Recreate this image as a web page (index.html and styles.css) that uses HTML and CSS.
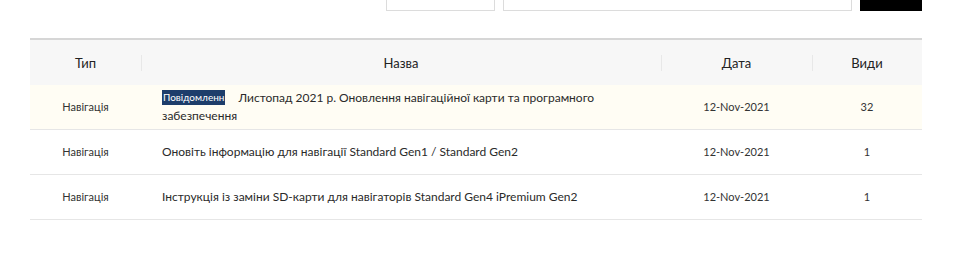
FILE: index.html
```html
<!DOCTYPE html>
<html lang="uk">
<head>
<meta charset="utf-8">
<link rel="stylesheet" href="styles.css">
</head>
<body>
<div class="page">
  <div class="toolbar">
    <div class="select"></div>
    <div class="search"></div>
    <div class="btn"></div>
  </div>
  <table class="list">
    <thead>
      <tr>
        <th class="c-type">Тип</th>
        <th class="c-title sep">Назва</th>
        <th class="c-date sep">Дата</th>
        <th class="c-views sep">Види</th>
      </tr>
    </thead>
    <tbody>
      <tr class="notice">
        <td class="c-type small">Навігація</td>
        <td class="c-title"><span class="tag">Повідомленн</span><span class="gap"></span>Листопад 2021 р. Оновлення навігаційної карти та програмного забезпечення</td>
        <td class="c-date small">12-Nov-2021</td>
        <td class="c-views small">32</td>
      </tr>
      <tr>
        <td class="c-type small">Навігація</td>
        <td class="c-title">Оновіть інформацію для навігації Standard Gen1 / Standard Gen2</td>
        <td class="c-date small">12-Nov-2021</td>
        <td class="c-views small">1</td>
      </tr>
      <tr>
        <td class="c-type small">Навігація</td>
        <td class="c-title">Інструкція із заміни SD-карти для навігаторів Standard Gen4 iPremium Gen2</td>
        <td class="c-date small">12-Nov-2021</td>
        <td class="c-views small">1</td>
      </tr>
    </tbody>
  </table>
</div>
</body>
</html>
```
FILE: styles.css
```css
html, body {
  margin: 0;
  padding: 0;
  background: #fff;
}
body {
  font-family: Lato, "Noto Sans", sans-serif;
  color: #222;
}
.page {
  padding: 0 38px 0 30px;
}
.toolbar {
  display: flex;
  justify-content: flex-end;
  gap: 8px;
  height: 34px;
  margin-top: -23px;
}
.select {
  width: 109px;
  border: 1px solid #dcdcdc;
  box-sizing: border-box;
}
.search {
  width: 349px;
  border: 1px solid #dcdcdc;
  box-sizing: border-box;
}
.btn {
  width: 62px;
  background: #000;
}
.list {
  margin-top: 27px;
  width: 100%;
  table-layout: fixed;
  border-collapse: collapse;
  border-top: 2px solid #d6d6d6;
}
.list th {
  height: 45px;
  background: #f7f7f7;
  font-weight: 400;
  font-size: 13px;
  color: #222;
  text-align: center;
  padding: 0;
  position: relative;
}
.list th.sep::before {
  content: "";
  position: absolute;
  left: 0;
  top: 15px;
  height: 16px;
  width: 1px;
  background: #e8e8e8;
}
.list td {
  border-bottom: 1px solid #e6e6e6;
  height: 44px;
  padding: 0;
  font-size: 12px;
  color: #2a2a2a;
  line-height: 18px;
}
.list tr.notice td {
  background: #fffdf4;
}
.c-type { width: 111px; text-align: center; }
.c-date { width: 151px; text-align: center; }
.c-views { width: 110px; text-align: center; }
.list td.c-title {
  text-align: left;
  padding: 0 40px 0 21px;
}
.list td.small {
  font-size: 11px;
  color: #333;
}
.tag {
  display: inline-block;
  vertical-align: top;
  margin-top: 1px;
  background: #1d3d6b;
  color: #fff;
  font-size: 10px;
  line-height: 15px;
  padding: 0 1px;
}
.gap {
  display: inline-block;
  width: 13px;
}
```
